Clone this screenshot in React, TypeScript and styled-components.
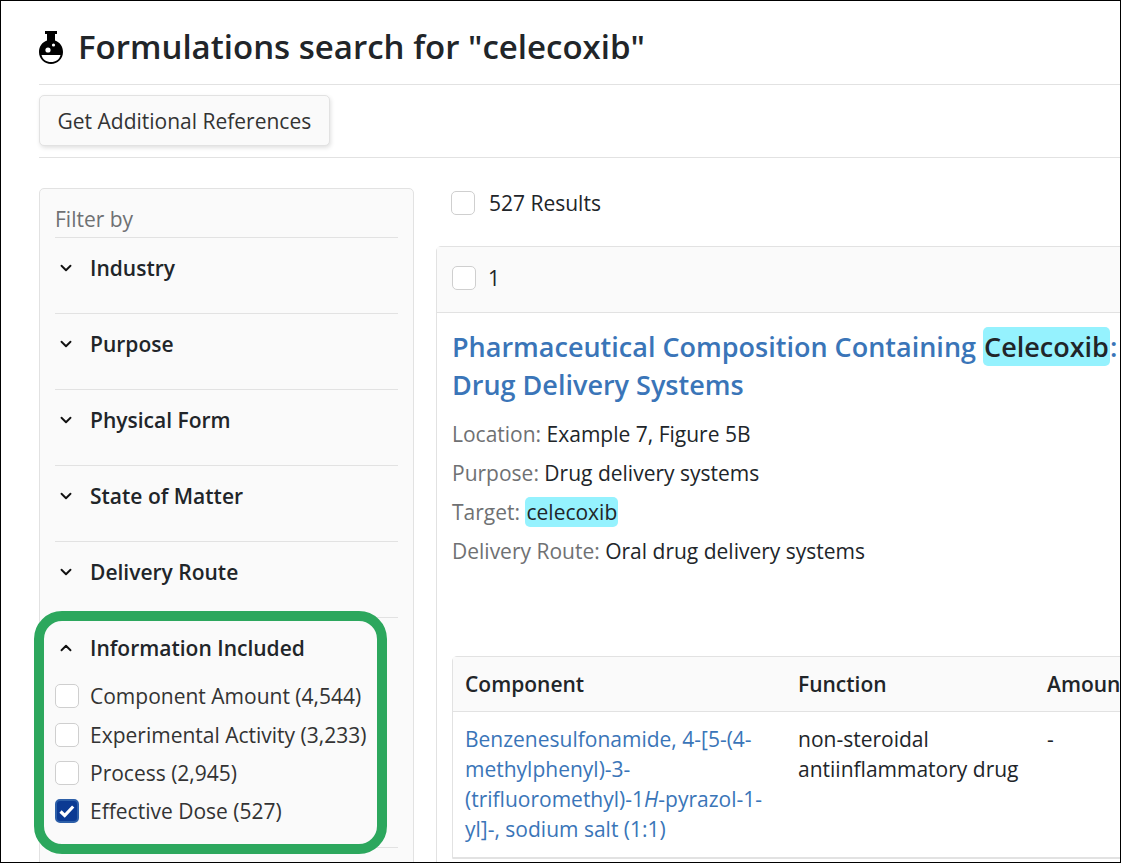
import styled, { createGlobalStyle } from "styled-components";
import { ChevronDown, ChevronUp } from "lucide-react";

const GlobalStyle = createGlobalStyle`
  html, body {
    margin: 0;
    padding: 0;
    background: #fff;
    overflow: hidden;
  }
  * { box-sizing: border-box; }
`;

const Page = styled.div`
  width: 1121px;
  height: 863px;
  border: 1px solid #000;
  overflow: hidden;
  padding: 0 0 0 38px;
  font-family: "Open Sans", sans-serif;
  font-size: 21px;
  color: #212529;
  line-height: 38px;
`;

const Header = styled.header`
  height: 84px;
  display: flex;
  align-items: center;
  border-bottom: 1px solid #e2e2e2;
  padding-top: 9px;
`;

const Title = styled.h1`
  margin: 0 0 0 15px;
  font-size: 33px;
  font-weight: 600;
  line-height: 44px;
  color: #212529;
`;

const Toolbar = styled.div`
  height: 73px;
  display: flex;
  align-items: flex-start;
  padding-top: 10px;
  border-bottom: 1px solid #e2e2e2;
`;

const Button = styled.button`
  height: 51px;
  padding: 0 17.5px;
  background: #fafafa;
  border: 1px solid #e2e2e2;
  border-radius: 5px;
  box-shadow: 1px 2px 4px rgba(0, 0, 0, 0.12);
  font-family: inherit;
  font-size: 21px;
  color: #333;
`;

const Columns = styled.div`
  display: flex;
  margin-top: 30px;
  gap: 22px;
`;

const Sidebar = styled.aside`
  flex: 0 0 375px;
  height: 720px;
  background: #fafafa;
  border: 1px solid #e2e2e2;
  border-radius: 5px;
  padding: 16px 15px 0;
`;

const FilterLabel = styled.div`
  height: 33px;
  line-height: 28px;
  color: #6f7173;
  border-bottom: 1px solid #e2e2e2;
`;

const Group = styled.section`
  position: relative;
  border-bottom: 1px solid #e2e2e2;
  height: 76px;
  padding-top: 11px;

  &:last-child {
    height: auto;
    padding-bottom: 16px;
  }
`;

const GroupHead = styled.div`
  display: flex;
  align-items: center;
  height: 38px;
  font-weight: 600;
  color: #212529;
`;

const ChevronSlot = styled.span`
  display: flex;
  width: 35px;
  padding-left: 2px;
  color: #111;
`;

const OptionList = styled.div`
  margin-top: 10px;
`;

const Option = styled.label`
  display: flex;
  align-items: center;
  height: 38.4px;
  white-space: nowrap;
  color: #333;
`;

const Box = styled.span<{ $checked?: boolean }>`
  flex: none;
  display: flex;
  align-items: center;
  justify-content: center;
  width: 24px;
  height: 24px;
  border-radius: 5px;
  background: ${({ $checked }) => ($checked ? "#0b3a93" : "#fff")};
  border: ${({ $checked }) => ($checked ? "2px solid #2d5fa8" : "1px solid #cfcfcf")};
`;

const OptionBox = styled(Box)`
  margin-right: 11px;
`;

const Highlight = styled.div`
  position: absolute;
  left: -21px;
  top: -7px;
  width: 353px;
  height: 243px;
  border: 10px solid #2ca75d;
  border-radius: 28px;
  pointer-events: none;
`;

const Main = styled.main`
  flex: 0 0 760px;
`;

const ResultsRow = styled.div`
  display: flex;
  align-items: center;
  height: 30px;
  margin-left: 15px;
  gap: 14px;
  line-height: 34px;
`;

const Card = styled.article`
  margin-top: 28px;
  border: 1px solid #e2e2e2;
  border-radius: 5px 0 0 0;
  height: 700px;
`;

const CardHead = styled.div`
  display: flex;
  align-items: center;
  height: 66px;
  padding: 0 0 4px 15px;
  gap: 12px;
  background: #fafafa;
  border-bottom: 1px solid #e2e2e2;
`;

const CardBody = styled.div`
  padding: 15px 15px 0;
`;

const ResultTitle = styled.h2`
  margin: 0;
  width: 680px;
  font-size: 27px;
  font-weight: 600;
  line-height: 38px;
  color: #3a75b8;
`;

const Mark = styled.mark`
  background: #95f2fe;
  color: #212529;
  border-radius: 5px;
  padding: 1px;
`;

const Meta = styled.div`
  margin-top: 11px;
  height: 241px;
`;

const MetaRow = styled.div`
  height: 39px;
  line-height: 39px;
  color: #212529;
`;

const MetaKey = styled.span`
  color: #6f7173;
`;

const Table = styled.div`
  border: 1px solid #e2e2e2;
  border-radius: 5px 0 0 0;
`;

const TableRow = styled.div<{ $head?: boolean }>`
  display: grid;
  grid-template-columns: 333px 249px 1fr;
  padding-left: 12px;
  background: ${({ $head }) => ($head ? "#fafafa" : "#fff")};
  border-bottom: 1px solid #e2e2e2;
  height: ${({ $head }) => ($head ? "55px" : "146px")};
  align-items: ${({ $head }) => ($head ? "center" : "start")};
  padding-top: ${({ $head }) => ($head ? "0" : "12px")};
  font-weight: ${({ $head }) => ($head ? 600 : 400)};
  line-height: 30px;
  white-space: nowrap;
`;

const Cell = styled.div`
  white-space: normal;
`;

const CompoundLink = styled.a`
  color: #3a75b8;
  display: block;
  width: 310px;
`;

function Flask() {
  return (
    <svg width="24" height="33" viewBox="0 0 24 33" aria-hidden="true">
      <rect x="6" y="0" width="12" height="3" fill="#000" />
      <path d="M8 3h8v6.500C20.700 11 24 15.500 24 21c0 6.600-5.400 12-12 12S0 27.600 0 21C0 15.500 3.300 11 8 9.500z" fill="#000" />
      <path d="M2.500 24h19c-.9 4.500-4.900 7-9.500 7s-8.600-2.500-9.500-7z" fill="#fff" />
      <circle cx="9" cy="19" r="2.600" fill="#fff" />
      <circle cx="14.500" cy="14" r="1.600" fill="#fff" />
    </svg>
  );
}

function Check() {
  return (
    <svg width="18" height="18" viewBox="0 0 18 18" aria-hidden="true">
      <path d="M2.500 9.500l4.200 4 8.500-9" fill="none" stroke="#fff" strokeWidth="3.200" />
    </svg>
  );
}

const closedFilters = ["Industry", "Purpose", "Physical Form", "State of Matter", "Delivery Route"];

const infoOptions = [
  { label: "Component Amount (4,544)", checked: false },
  { label: "Experimental Activity (3,233)", checked: false },
  { label: "Process (2,945)", checked: false },
  { label: "Effective Dose (527)", checked: true },
];

export default function App() {
  return (
    <Page>
      <GlobalStyle />
      <Header>
        <Flask />
        <Title>Formulations search for "celecoxib"</Title>
      </Header>
      <Toolbar>
        <Button>Get Additional References</Button>
      </Toolbar>
      <Columns>
        <Sidebar>
          <FilterLabel>Filter by</FilterLabel>
          {closedFilters.map((name) => (
            <Group key={name}>
              <GroupHead>
                <ChevronSlot>
                  <ChevronDown size={18} strokeWidth={2.5} />
                </ChevronSlot>
                {name}
              </GroupHead>
            </Group>
          ))}
          <Group>
            <Highlight />
            <GroupHead>
              <ChevronSlot>
                <ChevronUp size={18} strokeWidth={2.5} />
              </ChevronSlot>
              Information Included
            </GroupHead>
            <OptionList>
              {infoOptions.map((option) => (
                <Option key={option.label}>
                  <OptionBox $checked={option.checked}>{option.checked && <Check />}</OptionBox>
                  {option.label}
                </Option>
              ))}
            </OptionList>
          </Group>
        </Sidebar>
        <Main>
          <ResultsRow>
            <Box />
            527 Results
          </ResultsRow>
          <Card>
            <CardHead>
              <Box />1
            </CardHead>
            <CardBody>
              <ResultTitle>
                Pharmaceutical Composition Containing <Mark>Celecoxib</Mark>: Drug Delivery Systems
              </ResultTitle>
              <Meta>
                <MetaRow>
                  <MetaKey>Location:</MetaKey> Example 7, Figure 5B
                </MetaRow>
                <MetaRow>
                  <MetaKey>Purpose:</MetaKey> Drug delivery systems
                </MetaRow>
                <MetaRow>
                  <MetaKey>Target:</MetaKey> <Mark>celecoxib</Mark>
                </MetaRow>
                <MetaRow>
                  <MetaKey>Delivery Route:</MetaKey> Oral drug delivery systems
                </MetaRow>
              </Meta>
              <Table>
                <TableRow $head>
                  <div>Component</div>
                  <div>Function</div>
                  <div>Amount</div>
                </TableRow>
                <TableRow>
                  <Cell>
                    <CompoundLink>
                      Benzenesulfonamide, 4-[5-(4-methylphenyl)-3-(trifluoromethyl)-1<i>H</i>-pyrazol-1-yl]-, sodium salt
                      (1:1)
                    </CompoundLink>
                  </Cell>
                  <Cell>
                    non-steroidal
                    <br />
                    antiinflammatory drug
                  </Cell>
                  <Cell>-</Cell>
                </TableRow>
              </Table>
            </CardBody>
          </Card>
        </Main>
      </Columns>
    </Page>
  );
}
